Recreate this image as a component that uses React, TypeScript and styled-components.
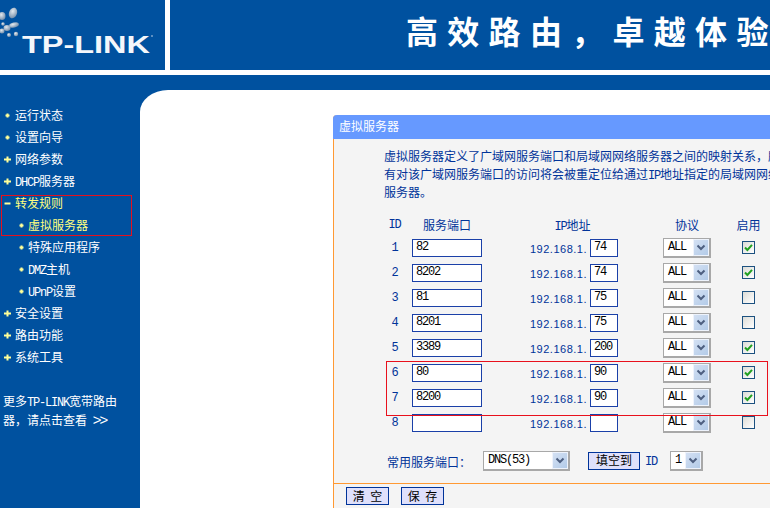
import React, { FC, ReactNode } from 'react';
import styled, { createGlobalStyle } from 'styled-components';

const BLUE = '#00519f';
const INK = '#003399';
const CJK = '"Noto Sans CJK SC", "Liberation Sans", sans-serif';

const GlobalStyle = createGlobalStyle`
  html, body {
    margin: 0;
    padding: 0;
    background: #fff;
  }
  #root {
    width: 770px;
    height: 508px;
    overflow: hidden;
  }
`;

const Page = styled.div`
  display: flex;
  flex-direction: column;
  width: 770px;
  height: 508px;
  overflow: hidden;
  background: #fff;
  font-family: ${CJK};
  font-size: 12px;
`;

const Header = styled.header`
  display: flex;
  flex: none;
  height: 70px;
  gap: 5px;
  margin-bottom: 5px;
`;

const LogoCell = styled.div`
  flex: none;
  width: 165px;
  background: ${BLUE};
`;

const Slogan = styled.div`
  flex: 1;
  padding-left: 236px;
  overflow: hidden;
  background: ${BLUE};
  color: #fff;
  font-size: 32px;
  font-weight: 700;
  line-height: 60px;
  letter-spacing: 9.3px;
  white-space: nowrap;
`;

const Body = styled.div`
  display: flex;
  flex: 1;
  min-height: 0;
  background: ${BLUE};
`;

const Sidebar = styled.nav`
  position: relative;
  flex: none;
  width: 140px;
  padding-top: 29px;
  box-sizing: border-box;
  color: #fff;
`;

const NavRow = styled.div<{ $sub?: boolean; $active?: boolean }>`
  display: flex;
  align-items: center;
  height: 22px;
  padding-left: ${(p) => (p.$sub ? 18 : 4)}px;
  color: ${(p) => (p.$active ? '#ffff80' : '#fff')};
  line-height: 22px;
  white-space: nowrap;
`;

const MarkerBox = styled.svg<{ $sub?: boolean }>`
  flex: none;
  width: 7px;
  height: 7px;
  margin-right: ${(p) => (p.$sub ? 3 : 4)}px;
  fill: #ffff99;
`;

const Lat = styled.span`
  font-family: "Liberation Mono", monospace;
  font-size: 12px;
  letter-spacing: -1.2px;
  line-height: 1;
`;

const NavGroup = styled.div`
  position: relative;
`;

const RedBox = styled.div<{ $top: number; $left: number; $width: number; $height: number }>`
  position: absolute;
  top: ${(p) => p.$top}px;
  left: ${(p) => p.$left}px;
  width: ${(p) => p.$width}px;
  height: ${(p) => p.$height}px;
  box-sizing: border-box;
  border: 1px solid #e8101c;
  pointer-events: none;
`;

const MoreNote = styled.div`
  margin-top: 23px;
  padding-left: 3px;
  line-height: 19px;
  white-space: nowrap;
`;

const MoreArrows = styled.span`
  margin-left: 3px;
  font-family: "Liberation Sans", sans-serif;
  font-size: 15px;
  font-weight: 400;
  letter-spacing: -2px;
  line-height: 1;
`;

const Main = styled.main`
  flex: 1;
  min-width: 0;
  margin-top: 15px;
  padding: 25px 0 0 193px;
  overflow: hidden;
  background: #fff;
  border-top-left-radius: 28px 22px;
`;

const Panel = styled.section`
  width: 470px;
  height: 393px;
  background: #f4f4f4;
  border-left: 1px solid #ff9933;
  border-top-left-radius: 4px;
  color: ${INK};
`;

const PanelTitle = styled.div`
  height: 24px;
  margin-left: -1px;
  padding-left: 6px;
  background: #6699ff;
  border-top-left-radius: 4px;
  color: #fff;
  line-height: 21px;
`;

const Intro = styled.p`
  margin: 0;
  padding: 8px 0 0 50px;
  line-height: 18px;
  white-space: nowrap;
`;

const Rows = styled.div`
  position: relative;
  margin: 13px 0 0 50px;
`;

const Row = styled.div<{ $head?: boolean }>`
  display: grid;
  grid-template-columns: 28px 70px 181px 48px 75px;
  align-items: center;
  height: ${(p) => (p.$head ? 21 : 25)}px;
`;

const IdCell = styled.div`
  width: 21px;
  font-family: "Liberation Mono", monospace;
  font-size: 12px;
  letter-spacing: -1.2px;
  text-align: center;
`;

const HeadCell = styled.div`
  text-align: center;
  white-space: nowrap;
`;

const IpCell = styled.div`
  display: flex;
  align-items: center;
  justify-content: flex-start;
  gap: 3px;
  padding-left: 48px;
`;

const IpPrefix = styled.span`
  width: 57px;
  margin-top: 2px;
  font-family: "Liberation Sans", sans-serif;
  font-size: 11px;
  letter-spacing: 0.5px;
  white-space: nowrap;
`;

const TextBox = styled.input<{ $w: number }>`
  display: block;
  width: ${(p) => p.$w}px;
  height: 18px;
  margin: 0;
  padding: 0 0 1px 3px;
  box-sizing: border-box;
  background: #fff;
  border: 1px solid #1a40a8;
  border-radius: 0;
  outline: none;
  color: #000;
  font-family: "Liberation Mono", monospace;
  font-size: 12px;
  letter-spacing: -1.2px;
`;

const SelectBox = styled.div<{ $w: number }>`
  display: flex;
  align-items: stretch;
  width: ${(p) => p.$w}px;
  height: 20px;
  box-sizing: border-box;
  background: #fff;
  border: 1px solid #a8a8a8;
  border-right-width: 2px;
  border-bottom-width: 2px;
  color: #000;
`;

const SelectValue = styled.span`
  flex: 1;
  padding-left: 4px;
  font-family: "Liberation Mono", monospace;
  font-size: 12px;
  letter-spacing: -1.2px;
  line-height: 17px;
  white-space: nowrap;
`;

const SelectArrow = styled.span`
  display: flex;
  flex: none;
  align-items: center;
  justify-content: center;
  width: 16px;
  box-sizing: border-box;
  background: linear-gradient(135deg, #d3e0f3, #b3cbe8);
  border: 1px solid #eef3fc;
`;

const Check = styled.span`
  display: flex;
  align-items: center;
  justify-content: center;
  justify-self: center;
  width: 13px;
  height: 13px;
  box-sizing: border-box;
  background: linear-gradient(135deg, #dcdcd7, #fff);
  border: 1px solid #1c5180;
`;

const ToolRow = styled.div`
  display: flex;
  align-items: center;
  height: 20px;
  margin: 16px 0 0 53px;
`;

const ToolLabel = styled.span`
  width: 96px;
  margin-top: 1px;
  white-space: nowrap;
`;

const Button = styled.button<{ $w: number }>`
  width: ${(p) => p.$w}px;
  height: 18px;
  margin: 0;
  padding: 0;
  background: #dfe0fb;
  border: 1px solid ${INK};
  border-radius: 0;
  color: #000;
  font-family: ${CJK};
  font-size: 12px;
  line-height: 14px;
  word-spacing: 3px;
`;

const FillButton = styled(Button)`
  margin: 0 5px 0 18px;
  padding-bottom: 2px;
`;

const ToolId = styled.span`
  width: 25px;
  margin-top: 2px;
  font-family: "Liberation Mono", monospace;
  font-size: 12px;
  letter-spacing: -1.2px;
`;

const Footer = styled.div`
  display: flex;
  gap: 12px;
  margin-top: 12px;
  padding: 3px 0 0 12px;
  border-top: 1px solid #ff9933;
`;

const Logo: FC = () => (
  <svg width="165" height="70" viewBox="0 0 165 70">
    <defs>
      <radialGradient id="drop" cx="0.4" cy="0.35" r="0.7">
        <stop offset="0" stopColor="#e4e9ee" />
        <stop offset="1" stopColor="#6f8aa8" />
      </radialGradient>
    </defs>
    <g fill="url(#drop)">
      <ellipse cx="13" cy="13" rx="4" ry="5.5" transform="rotate(20 13 13)" />
      <ellipse cx="2" cy="16" rx="3.5" ry="4" />
      <ellipse cx="14" cy="25" rx="5" ry="2.5" transform="rotate(-15 14 25)" />
      <ellipse cx="7" cy="28" rx="3.5" ry="3" />
      <circle cx="2" cy="31" r="2.5" />
      <circle cx="9" cy="35" r="2" />
      <circle cx="16" cy="34" r="2.2" />
      <circle cx="3" cy="24" r="1.8" />
    </g>
    <text
      x="22"
      y="52.6"
      fill="#f4f7fb"
      fontFamily="Liberation Sans, sans-serif"
      fontSize="23"
      fontWeight="700"
      textLength="128"
      lengthAdjust="spacingAndGlyphs"
    >
      TP-LINK
    </text>
    <circle cx="152" cy="36" r="0.8" fill="#cfdcec" />
  </svg>
);

const Marker: FC<{ kind: 'dot' | 'plus' | 'minus'; sub?: boolean }> = ({ kind, sub }) => (
  <MarkerBox $sub={sub} viewBox="0 0 7 7">
    {kind === 'dot' && <path d="M2.5 1.5h2v1h1v2h-1v1h-2v-1h-1v-2h1z" />}
    {kind === 'plus' && <path d="M2.5 0.5h2v2h2.5v2h-2.5v2h-2v-2h-2.5v-2h2.5z" />}
    {kind === 'minus' && <path d="M0.5 2.5h6v2h-6z" />}
  </MarkerBox>
);

const NavItem: FC<{ kind: 'dot' | 'plus' | 'minus'; sub?: boolean; active?: boolean; children: ReactNode }> = ({
  kind,
  sub,
  active,
  children,
}) => (
  <NavRow $sub={sub} $active={active}>
    <Marker kind={kind} sub={sub} />
    <span>{children}</span>
  </NavRow>
);

const Chevron: FC = () => (
  <svg width="10" height="7" viewBox="0 0 10 7">
    <path d="M1.5 1.5 5 5l3.5-3.5" fill="none" stroke="#4d5f80" strokeWidth="2" />
  </svg>
);

const Select: FC<{ width: number; value: string }> = ({ width, value }) => (
  <SelectBox $w={width}>
    <SelectValue>{value}</SelectValue>
    <SelectArrow>
      <Chevron />
    </SelectArrow>
  </SelectBox>
);

const rows = [
  { id: 1, port: '82', ip: '74', on: true },
  { id: 2, port: '8202', ip: '74', on: true },
  { id: 3, port: '81', ip: '75', on: false },
  { id: 4, port: '8201', ip: '75', on: false },
  { id: 5, port: '3389', ip: '200', on: true },
  { id: 6, port: '80', ip: '90', on: true },
  { id: 7, port: '8200', ip: '90', on: true },
  { id: 8, port: '', ip: '', on: false },
];

export default function App() {
  return (
    <Page>
      <GlobalStyle />
      <Header>
        <LogoCell>
          <Logo />
        </LogoCell>
        <Slogan>高效路由，卓越体验</Slogan>
      </Header>
      <Body>
        <Sidebar>
          <NavItem kind="dot">运行状态</NavItem>
          <NavItem kind="dot">设置向导</NavItem>
          <NavItem kind="plus">网络参数</NavItem>
          <NavItem kind="plus">
            <Lat>DHCP</Lat>服务器
          </NavItem>
          <NavGroup>
            <RedBox $top={3} $left={1} $width={131} $height={41} />
            <NavItem kind="minus" active>
              转发规则
            </NavItem>
            <NavItem kind="dot" sub active>
              虚拟服务器
            </NavItem>
          </NavGroup>
          <NavItem kind="dot" sub>
            特殊应用程序
          </NavItem>
          <NavItem kind="dot" sub>
            <Lat>DMZ</Lat>主机
          </NavItem>
          <NavItem kind="dot" sub>
            <Lat>UPnP</Lat>设置
          </NavItem>
          <NavItem kind="plus">安全设置</NavItem>
          <NavItem kind="plus">路由功能</NavItem>
          <NavItem kind="plus">系统工具</NavItem>
          <MoreNote>
            更多<Lat>TP-LINK</Lat>宽带路由
            <br />
            器，请点击查看 <MoreArrows>&gt;&gt;</MoreArrows>
          </MoreNote>
        </Sidebar>
        <Main>
          <Panel>
            <PanelTitle>虚拟服务器</PanelTitle>
            <Intro>
              虚拟服务器定义了广域网服务端口和局域网网络服务器之间的映射关系，所
              <br />
              有对该广域网服务端口的访问将会被重定位给通过<Lat>IP</Lat>地址指定的局域网网络
              <br />
              服务器。
            </Intro>
            <Rows>
              <Row $head>
                <IdCell>ID</IdCell>
                <HeadCell>服务端口</HeadCell>
                <HeadCell>
                  <Lat>IP</Lat>地址
                </HeadCell>
                <HeadCell>协议</HeadCell>
                <HeadCell>启用</HeadCell>
              </Row>
              {rows.map((row) => (
                <Row key={row.id}>
                  <IdCell>{row.id}</IdCell>
                  <TextBox $w={70} value={row.port} readOnly />
                  <IpCell>
                    <IpPrefix>192.168.1.</IpPrefix>
                    <TextBox $w={28} value={row.ip} readOnly />
                  </IpCell>
                  <Select width={48} value="ALL" />
                  <Check>
                    {row.on && (
                      <svg width="9" height="9" viewBox="0 0 9 9">
                        <path d="M1 4.5 3.4 7 8 1.8" fill="none" stroke="#21a121" strokeWidth="2" />
                      </svg>
                    )}
                  </Check>
                </Row>
              ))}
              <RedBox $top={147} $left={2} $width={382} $height={55} />
            </Rows>
            <ToolRow>
              <ToolLabel>常用服务端口：</ToolLabel>
              <Select width={87} value="DNS(53)" />
              <FillButton $w={52}>填空到</FillButton>
              <ToolId>ID</ToolId>
              <Select width={33} value="1" />
            </ToolRow>
            <Footer>
              <Button $w={43}>清 空</Button>
              <Button $w={43}>保 存</Button>
            </Footer>
          </Panel>
        </Main>
      </Body>
    </Page>
  );
}
